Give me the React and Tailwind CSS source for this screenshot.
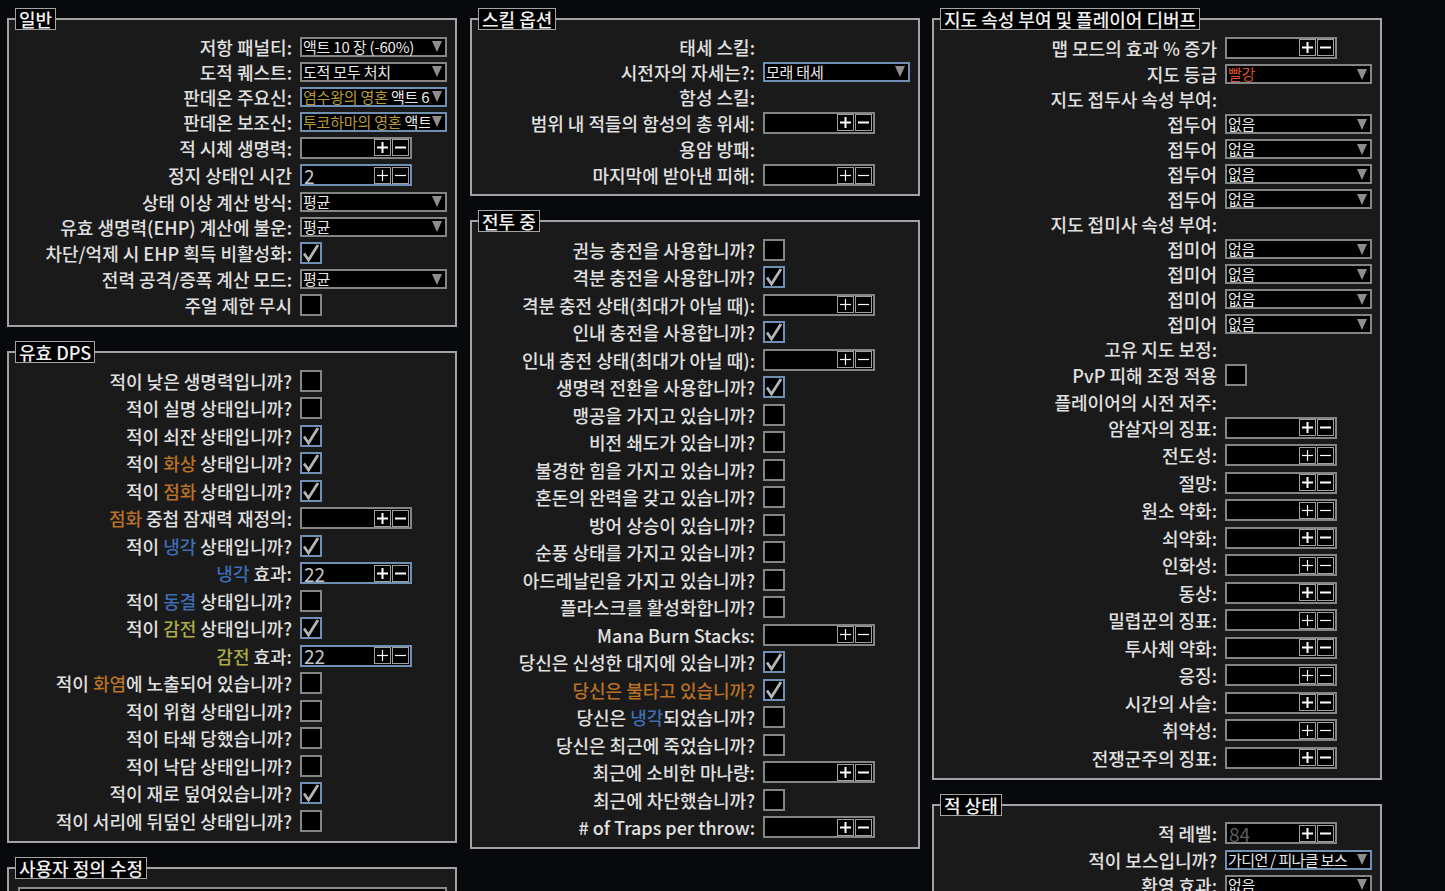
import React from "react";

const FIRE = "text-[#b97123]";
const COLD = "text-[#3f6db3]";
const LIGHT = "text-[#adaa47]";
const GOLD = "text-[#b89a3a]";

function Plus({ thin }) {
  return (
    <div className="flex h-[17px] w-[17px] items-center justify-center border border-[#a0a0a0] bg-black">
      <svg width="13" height="13" viewBox="0 0 13 13">
        <line x1="1" y1="6.5" x2="12" y2="6.5" stroke="#fff" strokeWidth={thin ? 1.2 : 2} />
        <line x1="6.5" y1="1" x2="6.5" y2="12" stroke="#fff" strokeWidth={thin ? 1.2 : 2} />
      </svg>
    </div>
  );
}

function Minus({ thin }) {
  return (
    <div className="flex h-[17px] w-[17px] items-center justify-center border border-[#a0a0a0] bg-black">
      <svg width="13" height="13" viewBox="0 0 13 13">
        <line x1="1" y1="6.5" x2="12" y2="6.5" stroke="#fff" strokeWidth={thin ? 1.2 : 2} />
      </svg>
    </div>
  );
}

function Dropdown({ value, blue, clip, tight }) {
  return (
    <div
      className={`flex h-[20px] w-[147px] items-center border-2 bg-black ${
        blue ? "border-[#6f8fb3]" : "border-[#858585]"
      }`}
    >
      <div
        className={`mr-[2px] min-w-0 flex-1 whitespace-nowrap pl-[1px] text-[15px] leading-[16px] text-[#e8e8e8] ${
          clip ? "overflow-x-clip" : ""
        } ${tight ? "tracking-[-0.6px]" : "tracking-[-0.2px]"}`}
      >
        {value}
      </div>
      <svg className="mr-[3px] shrink-0" width="10" height="11" viewBox="0 0 10 11">
        <polygon points="0,0 10,0 5,11" fill="#8e8e8e" />
      </svg>
    </div>
  );
}

function NumInput({ value, blue, dim, thin }) {
  return (
    <div
      className={`flex h-[22px] w-[112px] items-center border-2 bg-black ${
        blue ? "border-[#6f8fb3]" : "border-[#858585]"
      }`}
    >
      <div
        className={`min-w-0 flex-1 pl-[2px] text-[19px] leading-none ${
          dim ? "text-[#5e5e5e]" : "text-[#c4c4c4]"
        }`}
      >
        {value}
      </div>
      <div className="flex gap-[1px] pr-[1px]">
        <Plus thin={thin} />
        <Minus thin={thin} />
      </div>
    </div>
  );
}

function Check({ checked }) {
  return (
    <div
      className={`flex h-[22px] w-[22px] items-center justify-center border-2 bg-black ${
        checked ? "border-[#6f8fb3]" : "border-[#858585]"
      }`}
    >
      {checked && (
        <svg width="18" height="18" viewBox="0 0 18 18">
          <polyline
            points="2,9.5 6.5,16 16,1"
            fill="none"
            stroke="#b4b4b4"
            strokeWidth="2.8"
            strokeLinejoin="miter"
          />
        </svg>
      )}
    </div>
  );
}

function Row({ label, kind, value, blue, checked, dim, thin, clip, tight }) {
  const h = kind === "dd" || kind === "label" ? "h-[25px]" : "h-[27.5px]";
  let control = null;
  if (kind === "dd") control = <Dropdown value={value} blue={blue} clip={clip} tight={tight} />;
  if (kind === "input") control = <NumInput value={value} blue={blue} dim={dim} thin={thin} />;
  if (kind === "check") control = <Check checked={checked} />;
  return (
    <div className={`flex items-center ${h}`}>
      <div className="w-[283px] shrink-0 whitespace-nowrap text-right text-[18px] font-medium leading-none text-[#e0e0e0]">
        {label}
      </div>
      {control && <div className="ml-[8px] flex">{control}</div>}
    </div>
  );
}

function Panel({ title, first, children, pb = "pb-[6px]" }) {
  return (
    <div
      className={`relative ${first ? "" : "mt-[24px]"} border-2 border-[#a3a3a3] bg-[#1a1a1a] pt-[14px] ${pb}`}
    >
      <div className="absolute left-[6px] top-[-12px] flex h-[22px] items-center whitespace-nowrap border border-[#a3a3a3] bg-black px-[3px] text-[18px] font-medium leading-none text-[#f0f0f0]">
        {title}
      </div>
      {children}
    </div>
  );
}

export default function App() {
  return (
    <div className="h-[891px] w-[1445px] overflow-hidden bg-[#07090c] font-['Noto_Sans_CJK_KR','Noto_Sans',sans-serif]">
      <div className="flex items-start pl-[7px] pt-[18px]">
        {/* Column 1 */}
        <div className="w-[450px] shrink-0">
          <Panel title="일반" first>
            <Row kind="dd" label="저항 패널티:" value="액트 10 장 (-60%)" />
            <Row kind="dd" label="도적 퀘스트:" value="도적 모두 처치" />
            <Row
              kind="dd"
              blue
              clip
              label="판데온 주요신:"
              value={
                <>
                  <span className={GOLD}>염수왕의 영혼</span> 액트 6
                </>
              }
            />
            <Row
              kind="dd"
              blue
              clip
              label="판데온 보조신:"
              value={
                <>
                  <span className={GOLD}>투코하마의 영혼</span> 액트
                </>
              }
            />
            <Row kind="input" label="적 시체 생명력:" />
            <Row kind="input" label="정지 상태인 시간" value="2" blue thin />
            <Row kind="dd" label="상태 이상 계산 방식:" value="평균" />
            <Row kind="dd" label="유효 생명력(EHP) 계산에 불운:" value="평균" />
            <Row kind="check" label="차단/억제 시 EHP 획득 비활성화:" checked />
            <Row kind="dd" label="전력 공격/증폭 계산 모드:" value="평균" />
            <Row kind="check" label="주얼 제한 무시" />
          </Panel>

          <Panel title="유효 DPS">
            <Row kind="check" label="적이 낮은 생명력입니까?" />
            <Row kind="check" label="적이 실명 상태입니까?" />
            <Row kind="check" label="적이 쇠잔 상태입니까?" checked />
            <Row
              kind="check"
              checked
              label={
                <>
                  적이 <span className={FIRE}>화상</span> 상태입니까?
                </>
              }
            />
            <Row
              kind="check"
              checked
              label={
                <>
                  적이 <span className={FIRE}>점화</span> 상태입니까?
                </>
              }
            />
            <Row
              kind="input"
              label={
                <>
                  <span className={FIRE}>점화</span> 중첩 잠재력 재정의:
                </>
              }
            />
            <Row
              kind="check"
              checked
              label={
                <>
                  적이 <span className={COLD}>냉각</span> 상태입니까?
                </>
              }
            />
            <Row
              kind="input"
              blue
              value="22"
              label={
                <>
                  <span className={COLD}>냉각</span> 효과:
                </>
              }
            />
            <Row
              kind="check"
              label={
                <>
                  적이 <span className={COLD}>동결</span> 상태입니까?
                </>
              }
            />
            <Row
              kind="check"
              checked
              label={
                <>
                  적이 <span className={LIGHT}>감전</span> 상태입니까?
                </>
              }
            />
            <Row
              kind="input"
              blue
              thin
              value="22"
              label={
                <>
                  <span className={LIGHT}>감전</span> 효과:
                </>
              }
            />
            <Row
              kind="check"
              label={
                <>
                  적이 <span className={FIRE}>화염</span>에 노출되어 있습니까?
                </>
              }
            />
            <Row kind="check" label="적이 위협 상태입니까?" />
            <Row kind="check" label="적이 타쇄 당했습니까?" />
            <Row kind="check" label="적이 낙담 상태입니까?" />
            <Row kind="check" label="적이 재로 덮여있습니까?" checked />
            <Row kind="check" label="적이 서리에 뒤덮인 상태입니까?" />
          </Panel>

          <Panel title="사용자 정의 수정">
            <div className="ml-[9px] mr-[8px] mt-[4px] h-[300px] border-2 border-[#8a8a8a] bg-black" />
          </Panel>
        </div>

        {/* Column 2 */}
        <div className="ml-[13px] w-[450px] shrink-0">
          <Panel title="스킬 옵션" first pb="pb-[5px]">
            <Row kind="label" label="태세 스킬:" />
            <Row kind="dd" blue label="시전자의 자세는?:" value="모래 태세" />
            <Row kind="label" label="함성 스킬:" />
            <Row kind="input" label="범위 내 적들의 함성의 총 위세:" />
            <Row kind="label" label="용암 방패:" />
            <Row kind="input" label="마지막에 받아낸 피해:" thin />
          </Panel>

          <Panel title="전투 중">
            <Row kind="check" label="권능 충전을 사용합니까?" />
            <Row kind="check" label="격분 충전을 사용합니까?" checked />
            <Row kind="input" label="격분 충전 상태(최대가 아닐 때):" thin />
            <Row kind="check" label="인내 충전을 사용합니까?" checked />
            <Row kind="input" label="인내 충전 상태(최대가 아닐 때):" thin />
            <Row kind="check" label="생명력 전환을 사용합니까?" checked />
            <Row kind="check" label="맹공을 가지고 있습니까?" />
            <Row kind="check" label="비전 쇄도가 있습니까?" />
            <Row kind="check" label="불경한 힘을 가지고 있습니까?" />
            <Row kind="check" label="혼돈의 완력을 갖고 있습니까?" />
            <Row kind="check" label="방어 상승이 있습니까?" />
            <Row kind="check" label="순풍 상태를 가지고 있습니까?" />
            <Row kind="check" label="아드레날린을 가지고 있습니까?" />
            <Row kind="check" label="플라스크를 활성화합니까?" />
            <Row kind="input" label="Mana Burn Stacks:" thin />
            <Row kind="check" label="당신은 신성한 대지에 있습니까?" checked />
            <Row kind="check" checked label={<span className={FIRE}>당신은 불타고 있습니까?</span>} />
            <Row
              kind="check"
              label={
                <>
                  당신은 <span className={COLD}>냉각</span>되었습니까?
                </>
              }
            />
            <Row kind="check" label="당신은 최근에 죽었습니까?" />
            <Row kind="input" label="최근에 소비한 마나량:" />
            <Row kind="check" label="최근에 차단했습니까?" />
            <Row kind="input" label="# of Traps per throw:" />
          </Panel>
        </div>

        {/* Column 3 */}
        <div className="ml-[12px] w-[450px] shrink-0">
          <Panel title="지도 속성 부여 및 플레이어 디버프" first>
            <Row kind="input" label="맵 모드의 효과 % 증가" />
            <Row kind="dd" label="지도 등급" value={<span className="text-[#d8502c]">빨강</span>} />
            <Row kind="label" label="지도 접두사 속성 부여:" />
            <Row kind="dd" label="접두어" value="없음" />
            <Row kind="dd" label="접두어" value="없음" />
            <Row kind="dd" label="접두어" value="없음" />
            <Row kind="dd" label="접두어" value="없음" />
            <Row kind="label" label="지도 접미사 속성 부여:" />
            <Row kind="dd" label="접미어" value="없음" />
            <Row kind="dd" label="접미어" value="없음" />
            <Row kind="dd" label="접미어" value="없음" />
            <Row kind="dd" label="접미어" value="없음" />
            <Row kind="label" label="고유 지도 보정:" />
            <Row kind="check" label="PvP 피해 조정 적용" />
            <Row kind="label" label="플레이어의 시전 저주:" />
            <Row kind="input" label="암살자의 징표:" />
            <Row kind="input" label="전도성:" thin />
            <Row kind="input" label="절망:" />
            <Row kind="input" label="원소 약화:" thin />
            <Row kind="input" label="쇠약화:" />
            <Row kind="input" label="인화성:" thin />
            <Row kind="input" label="동상:" />
            <Row kind="input" label="밀렵꾼의 징표:" thin />
            <Row kind="input" label="투사체 약화:" />
            <Row kind="input" label="응징:" thin />
            <Row kind="input" label="시간의 사슬:" />
            <Row kind="input" label="취약성:" thin />
            <Row kind="input" label="전쟁군주의 징표:" />
          </Panel>

          <Panel title="적 상태">
            <Row kind="input" label="적 레벨:" value="84" dim />
            <Row kind="dd" blue tight label="적이 보스입니까?" value="가디언 / 피나클 보스" />
            <Row kind="dd" label="환영 효과:" value="없음" />
            <Row kind="input" label="적 물리 피해 감소:" />
            <Row kind="input" label="적 화염 저항:" />
          </Panel>
        </div>
      </div>
    </div>
  );
}
